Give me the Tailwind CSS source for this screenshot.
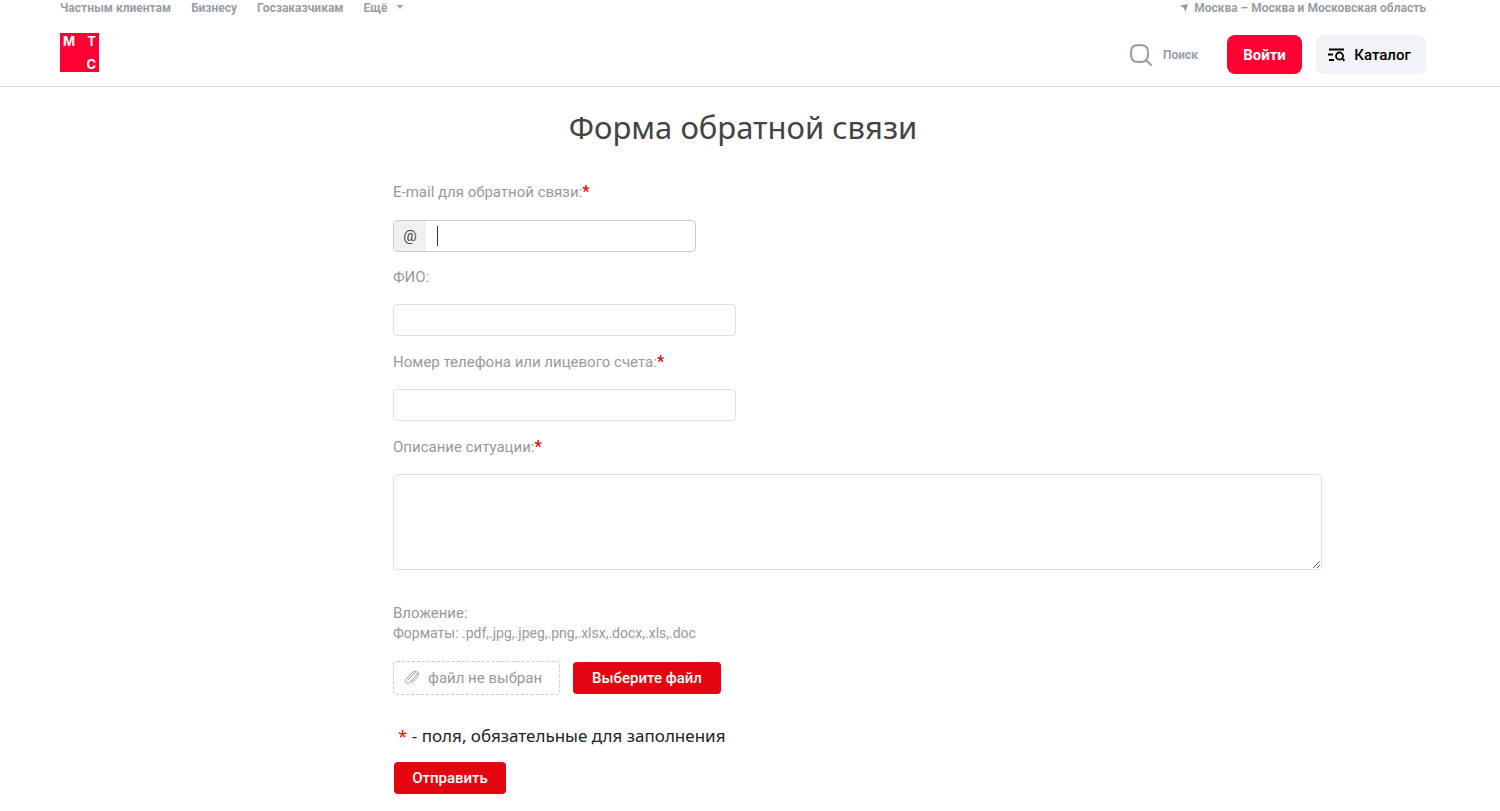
<!DOCTYPE html>
<html lang="ru">
<head>
    <meta charset="UTF-8">
    <meta name="viewport" content="width=device-width, initial-scale=1.0">
    <title>Форма обратной связи</title>
    <script src="https://cdn.jsdelivr.net/npm/@tailwindcss/browser@4"></script>
</head>
<body class="bg-white font-[Roboto,sans-serif]">
    <header class="border-b border-[#dbdfe6] pr-[74px] pl-[60px]">
        <div class="flex justify-between text-[12px] leading-[16px] font-bold text-[#969fa8]">
            <nav class="flex gap-[20px]">
                <a href="#">Частным клиентам</a>
                <a href="#">Бизнесу</a>
                <a href="#">Госзаказчикам</a>
                <a href="#" class="flex items-center gap-[10px]">Ещё
                    <svg class="size-[6px]" viewBox="0 0 6 6" fill="currentColor"><path d="M0 0h6L3 4z"/></svg>
                </a>
            </nav>
            <a href="#" class="flex items-center gap-[6px]">
                <svg class="size-2" viewBox="0 0 8 8" fill="currentColor"><path d="M0 1.500 8 0 5.500 8 3.800 4z"/></svg>
                Москва – Москва и Московская область
            </a>
        </div>
        <div class="flex h-[70px] items-center justify-between pt-[7px]">
            <a href="#" aria-label="МТС" class="mb-1 grid size-[39px] grid-cols-2 content-between bg-[#ff0032] px-[3px] py-[2px] font-[Inter,sans-serif] text-[13px] leading-[12px] font-bold text-white">
                <span>М</span><span class="text-right">Т</span>
                <span></span><span class="text-right">С</span>
            </a>
            <div class="flex items-center">
                <a href="#" class="mr-[29px] flex items-center gap-[11px] text-[12px] font-bold text-[#969fa8]">
                    <svg class="size-[22px]" viewBox="0 0 22 22" fill="none" stroke="currentColor" stroke-width="2" stroke-linecap="round"><path d="M9.500 1c6.500 0 8.500 2 8.500 8.500s-2 8.500-8.500 8.500-8.500-2-8.500-8.500 2-8.500 8.500-8.500zM16.500 16.500l4.500 4.500"/></svg>
                    Поиск
                </a>
                <button class="mr-[14px] h-[39px] w-[75px] rounded-lg bg-[#ff0032] pt-[2px] text-[15px] font-bold text-white">Войти</button>
                <button class="flex h-[39px] w-[110px] items-center justify-center gap-[9px] rounded-lg bg-[#f2f3f7] pt-px pr-[3px] text-[15px] font-medium text-black">
                    <svg class="h-[14px] w-[17px]" viewBox="0 0 17 14" fill="none" stroke="currentColor" stroke-width="1.800"><path d="M1 1.500h15M0 6.500h5M1 12h5M14.200 10.200l2.200 2.800"/><circle cx="11.500" cy="8" r="3.500"/></svg>
                    Каталог
                </button>
            </div>
        </div>
    </header>

    <main class="pt-[20px] pr-[74px] pl-[60px]">
        <h1 class="text-center font-['Noto_Sans',sans-serif] text-[31px] leading-[40px] text-[#444]">Форма обратной связи</h1>
        <form class="mt-[33px] mr-[104px] ml-[333px] text-[15px] leading-[24px] text-[#999]">
            <label for="email" class="block">E-mail для обратной связи:<span class="text-base leading-[20px] font-bold text-[#e30611]">*</span></label>
            <div class="mt-4 flex h-[32px] w-[303px] items-center overflow-hidden rounded border border-[#ccc]">
                <span class="grid w-[32px] place-items-center self-stretch bg-[#f0f0f0] text-[#444]">@</span>
                <span class="ml-[11px] h-5 w-px bg-[#333]"></span>
                <input id="email" type="email" class="min-w-0 flex-1 text-[15px] text-[#333] outline-none">
            </div>
            <label for="name" class="mt-[13px] block">ФИО:</label>
            <input id="name" type="text" class="mt-[15px] block h-[32px] w-[343px] rounded border border-[#e0e0e0] px-2">
            <label for="phone" class="mt-[14px] block">Номер телефона или лицевого счета:<span class="text-base leading-[20px] font-bold text-[#e30611]">*</span></label>
            <input id="phone" type="text" class="mt-[15px] block h-[32px] w-[343px] rounded border border-[#e0e0e0] px-2">
            <label for="text" class="mt-[14px] block">Описание ситуации:<span class="text-base leading-[20px] font-bold text-[#e30611]">*</span></label>
            <textarea id="text" class="mt-[15px] block h-[96px] w-full rounded border border-[#e0e0e0] p-2"></textarea>

            <div class="mt-[32px] leading-[22px]">Вложение:</div>
            <div class="text-[14px] leading-[18px]">Форматы: .pdf,.jpg,.jpeg,.png,.xlsx,.docx,.xls,.doc</div>
            <div class="mt-[19px] flex items-center gap-[13px]">
                <div class="flex h-[34px] w-[167px] items-center gap-2 rounded border border-dashed border-[#ccc] pl-[10px]">
                    <svg class="size-4" viewBox="0 0 16 16" fill="none" stroke="currentColor" stroke-linecap="round"><path d="m4 10 6-6.500c1.700-1.500 3.600.3 2.200 2l-6.700 7.200c-2.400 2.300-5.700-.8-3.600-3.300l6.900-7.100c3-2.800 7.700.7 4.900 4.200l-5.700 6"/></svg>
                    <span>файл не выбран</span>
                </div>
                <button type="button" class="h-[32px] w-[148px] rounded bg-[#e30611] text-[15px] font-medium text-white">Выберите файл</button>
            </div>
            <p class="mt-[27px] pl-[5px] font-['Noto_Sans',sans-serif] text-[17px] leading-[28px] text-[#222]"><span class="text-[#f00]">*</span> - поля, обязательные для заполнения</p>
            <button type="submit" class="mt-[12px] ml-[1px] h-[32px] w-[112px] rounded bg-[#e30611] text-[15px] font-medium text-white">Отправить</button>
        </form>
    </main>
</body>
</html>
